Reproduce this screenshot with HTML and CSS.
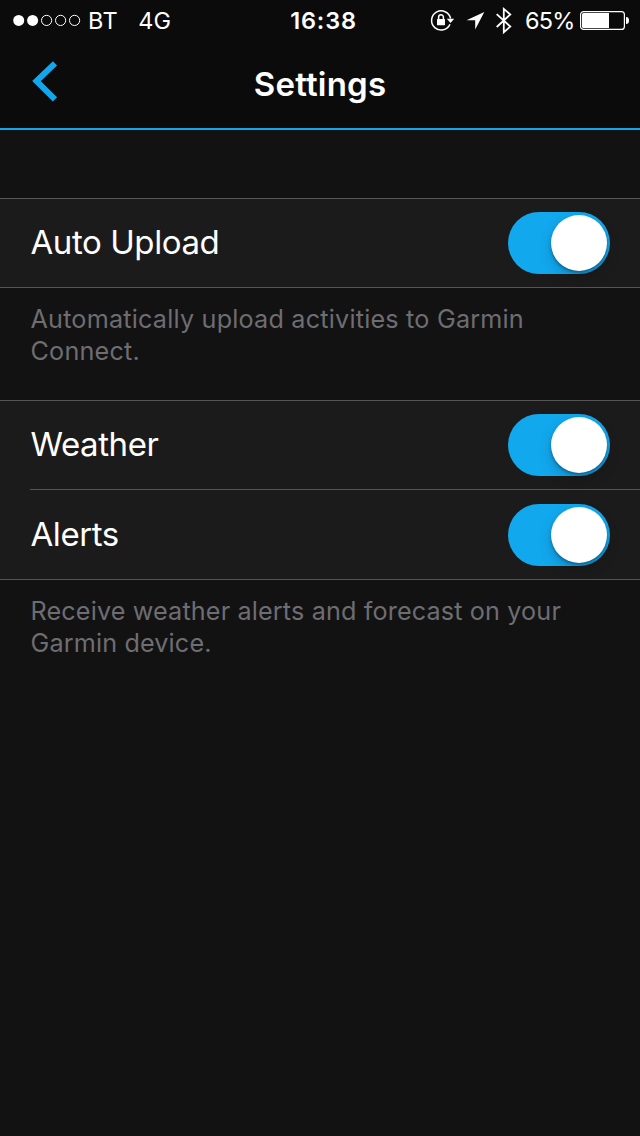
FILE: index.html
```html
<!DOCTYPE html>
<html lang="en">
<head>
<meta charset="utf-8">
<title>Settings</title>
<link rel="stylesheet" href="styles.css">
</head>
<body>
<header class="header">
  <div class="status">
    <div class="status-left">
      <svg class="signal" width="68" height="12" viewBox="0 0 68 12">
        <circle cx="5.7" cy="6.4" r="5.5" fill="#fff"/><circle cx="19.6" cy="6.4" r="5.5" fill="#fff"/>
        <g fill="none" stroke="#fff" stroke-width="1"><circle cx="33.6" cy="6.4" r="5.1"/><circle cx="47.6" cy="6.4" r="5.1"/><circle cx="61.6" cy="6.4" r="5.1"/></g>
      </svg>
      <span class="carrier">BT</span>
      <span class="network">4G</span>
    </div>
    <span class="time">16:38</span>
    <div class="status-right">
      <svg class="icons" width="82" height="40" viewBox="430 0 82 40">
        <path d="M450 24.3A9.6 9.6 0 1 1 450.6 18.5" fill="none" stroke="#fff" stroke-width="1.5"/>
        <path d="M446.8 18.7H454.2L450.5 22.9Z" fill="#fff"/>
        <rect x="437" y="19" width="8" height="6.2" rx=".6" fill="#fff"/>
        <path d="M438.6 19.5V17.3a2.4 2.6 0 0 1 4.8 0V19.5" fill="none" stroke="#fff" stroke-width="1.5"/>
        <path d="M484.3 12L466.5 20.3H475.2V29.4Z" fill="#fff"/>
        <path d="M496.7 14.2L510.3 26.6L503.8 32.3V8.9L510.3 14.5L496.7 27" fill="none" stroke="#fff" stroke-width="1.8" stroke-miterlimit="8"/>
      </svg>
      <span class="percent">65%</span>
      <svg class="battery" width="49" height="20" viewBox="0 0 49 20">
        <rect x=".6" y="1.6" width="43.8" height="17.8" rx="3" fill="none" stroke="#fff" stroke-width="1.2"/>
        <rect x="2" y="3" width="27" height="15" rx="1.5" fill="#fff"/><rect x="26" y="3" width="3" height="15" fill="#fff"/>
        <path d="M46 7c2 0 3 1 3 3.5s-1 3.5-3 3.5z" fill="#fff"/>
      </svg>
    </div>
  </div>
  <nav class="nav">
    <svg class="back" width="26" height="42" viewBox="0 0 26 42"><path d="M23 3.3L4.5 21.1L23 39.3" fill="none" stroke="#11a7ee" stroke-width="6"/></svg>
    <h1 class="title">Settings</h1>
  </nav>
</header>
<main class="content">
  <section class="group">
    <div class="row"><span class="label">Auto Upload</span><span class="switch"><span class="knob"></span></span></div>
  </section>
  <p class="note">Automatically upload activities to Garmin<br>Connect.</p>
  <section class="group">
    <div class="row"><span class="label">Weather</span><span class="switch"><span class="knob"></span></span></div>
    <div class="divider"></div>
    <div class="row last"><span class="label">Alerts</span><span class="switch"><span class="knob"></span></span></div>
  </section>
  <p class="note weather-note">Receive weather alerts and forecast on your<br>Garmin device.</p>
</main>
</body>
</html>
```
FILE: styles.css
```css
* { box-sizing: border-box; }
body { margin: 0; width: 640px; height: 1136px; background: #121212; color: #fff; font-family: Inter, "Liberation Sans", sans-serif; overflow: hidden; }
svg { display: block; flex: none; }
.header { height: 130px; background: #0b0b0b; border-bottom: 2px solid #11a7ee; }
.status { display: grid; grid-template-columns: 1fr auto 1fr; align-items: center; height: 40px; padding: 0 11px 0 13px; font-size: 23.5px; line-height: 39px; white-space: nowrap; }
.status-left, .status-right { display: flex; align-items: center; height: 40px; }
.status-right { justify-content: flex-end; }
.carrier, .network, .time, .percent { padding-top: 1px; }
.carrier { margin-left: 7px; letter-spacing: .5px; }
.network { margin-left: 20px; }
.time { font-weight: 600; letter-spacing: .8px; padding-left: 5px; }
.percent { width: 50px; margin: 0 5px 0 13px; letter-spacing: -.8px; }
.nav { display: grid; grid-template-columns: 100px 1fr 100px; align-items: center; height: 88px; padding-bottom: 4px; }
.back { margin-left: 32px; margin-top: -2px; }
.title { margin: 0; text-align: center; font-size: 33px; font-weight: 600; line-height: 44px; letter-spacing: .2px; padding-top: 4px; }
.content { padding-top: 68px; }
.group { border-top: 1px solid #555557; border-bottom: 1px solid #555557; background: #1b1b1b; }
.row { display: flex; justify-content: space-between; align-items: center; height: 88px; padding: 0 30px; }
.row.last { height: 89px; }
.divider { height: 1px; margin-left: 30px; background: #555557; }
.label { padding: 0 0 2px .5px; font-size: 33px; line-height: 44px; letter-spacing: -.42px; }
.switch { display: flex; justify-content: flex-end; width: 102px; height: 62px; padding: 3px; border-radius: 31px; background: #12a8ee; }
.knob { width: 56px; height: 56px; border-radius: 50%; background: #fff; box-shadow: 0 6px 14px rgba(0,0,0,.18), 0 2px 3px rgba(0,0,0,.3); }
.note { margin: 0; height: 112px; padding: 15px 30px 0 30.5px; color: #6d6d72; font-size: 25.2px; line-height: 32px; letter-spacing: .2px; white-space: nowrap; }
.weather-note { letter-spacing: .14px; }
```
